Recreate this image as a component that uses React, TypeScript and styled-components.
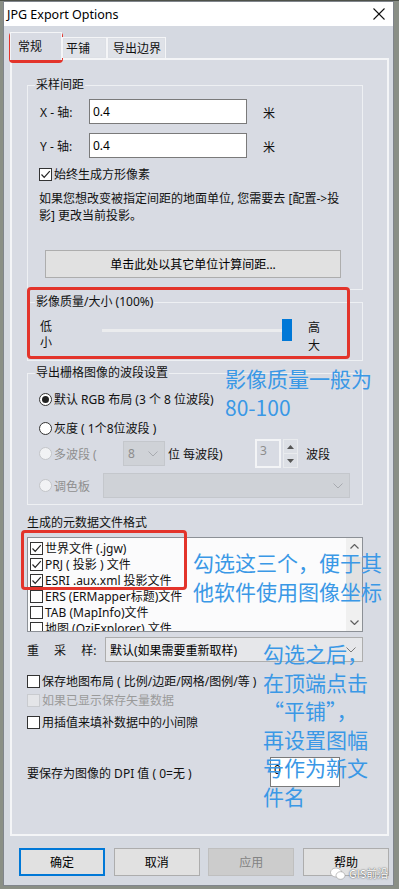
import React from "react";
import styled, { createGlobalStyle } from "styled-components";

const GlobalStyle = createGlobalStyle`
  html, body { margin: 0; padding: 0; }
  body {
    background: #8a8f86;
    font-family: "Noto Sans", "Noto Sans CJK SC", sans-serif;
    font-size: 12px;
    color: #111;
  }
  * { box-sizing: border-box; }
`;

const Root = styled.div`
  position: relative;
  width: 399px;
  height: 889px;
  padding: 1px 0 0 3px;
  overflow: hidden;
  background: linear-gradient(#4d5149 0 1px, #8a8f86 1px);
`;

const Window = styled.div`
  width: 391px;
  height: 885px;
  border: 1px solid #80858c;
  background: #d5d9e1;
  display: flex;
  flex-direction: column;
`;

const TitleBar = styled.div`
  height: 24px;
  flex: none;
  background: #fff;
  display: flex;
  align-items: center;
  justify-content: space-between;
  padding: 0 8px 0 3px;
`;

const Title = styled.span`
  font-family: "Noto Sans", sans-serif;
  font-size: 12.5px;
  color: #000;
`;

const Body = styled.div`
  flex: 1;
  display: flex;
  flex-direction: column;
  padding: 6px 4px 0 6px;
`;

const TabStrip = styled.div`
  display: flex;
  align-items: flex-end;
  height: 26px;
  position: relative;
  z-index: 1;
`;

const Tab = styled.div<{ $active?: boolean; $w: number; $pl: number }>`
  width: ${(p) => p.$w}px;
  height: ${(p) => (p.$active ? 28 : 21)}px;
  margin-bottom: ${(p) => (p.$active ? -2 : 0)}px;
  padding-left: ${(p) => p.$pl}px;
  padding-top: ${(p) => (p.$active ? 6 : 3)}px;
  line-height: 16px;
  background: ${(p) => (p.$active ? "#d8dbe3" : "#dfe2e8")};
  border: 1px solid #f4f5f7;
  border-bottom: none;
  box-shadow: ${(p) => (p.$active ? "none" : "inset 0 0 0 1px #dcdfe5")};
  white-space: nowrap;
`;

const Panel = styled.div`
  height: 778px;
  border: 2px solid #f4f5f7;
  background: #d8dbe3;
  padding: 17px 24px 0 15px;
  display: flex;
  flex-direction: column;
`;

const Group = styled.fieldset<{ $h: number; $mt?: number }>`
  margin: ${(p) => p.$mt ?? 0}px 0 0 0;
  padding: 0;
  border: 1px solid #eef0f3;
  height: ${(p) => p.$h}px;
  min-width: 0;
`;

const Legend = styled.legend`
  padding: 0 1px;
  margin-left: 7px;
  line-height: 16px;
  font-size: 12px;
  color: #111;
`;

const GroupInner = styled.div<{ $pt: number }>`
  padding: ${(p) => p.$pt}px 12px 0 11px;
  display: flex;
  flex-direction: column;
`;

const FieldRow = styled.div<{ $mt?: number }>`
  display: flex;
  align-items: center;
  height: 25px;
  margin-top: ${(p) => p.$mt ?? 0}px;
`;

const FieldLabel = styled.span`
  width: 50px;
  padding-left: 1px;
  white-space: nowrap;
`;

const TextBox = styled.div<{ $w: number; $h: number }>`
  width: ${(p) => p.$w}px;
  height: ${(p) => p.$h}px;
  border: 1px solid #7a7a7a;
  background: #fff;
  padding: 3px 0 0 3px;
  line-height: 17px;
  color: #000;
`;

const Unit = styled.span`
  margin-left: 16px;
  margin-top: 3px;
`;

const CheckRow = styled.div<{ $mt?: number; $disabled?: boolean }>`
  display: flex;
  align-items: center;
  height: 16px;
  margin-top: ${(p) => p.$mt ?? 0}px;
  white-space: nowrap;
  color: ${(p) => (p.$disabled ? "#9a9a9a" : "#111")};
`;

const Box = styled.span<{ $disabled?: boolean }>`
  width: 13px;
  height: 13px;
  flex: none;
  border: 1px solid ${(p) => (p.$disabled ? "#c9cbcf" : "#333")};
  background: ${(p) => (p.$disabled ? "#e4e5e8" : "#fff")};
  margin-right: 2px;
  display: flex;
  align-items: center;
  justify-content: center;
`;

const Para = styled.div`
  margin-top: 8px;
  line-height: 17px;
  white-space: nowrap;
`;

const Button = styled.div<{ $w: number; $variant?: "primary" | "disabled" }>`
  width: ${(p) => p.$w}px;
  height: 28px;
  display: flex;
  align-items: center;
  justify-content: center;
  background: ${(p) => (p.$variant === "disabled" ? "#cccccc" : "#e1e1e1")};
  border: ${(p) =>
    p.$variant === "primary"
      ? "2px solid #0078d7"
      : p.$variant === "disabled"
      ? "1px solid #bfbfbf"
      : "1px solid #adadad"};
  color: ${(p) => (p.$variant === "disabled" ? "#838383" : "#000")};
  white-space: nowrap;
`;

const WideButton = styled(Button)`
  margin: 26px 0 0 6px;
`;

const SliderRow = styled.div`
  display: flex;
  align-items: flex-start;
`;

const SideCol = styled.div<{ $w?: number; $lh: number; $ml?: number }>`
  width: ${(p) => (p.$w ? `${p.$w}px` : "auto")};
  margin-left: ${(p) => p.$ml ?? 0}px;
  display: flex;
  flex-direction: column;
  line-height: ${(p) => p.$lh}px;
  padding-left: 1px;
`;

const Track = styled.div`
  width: 190px;
  height: 22px;
  display: flex;
  justify-content: flex-end;
  background: linear-gradient(#ebecee, #ebecee) center / 100% 3px no-repeat;
`;

const Thumb = styled.div`
  width: 10px;
  height: 22px;
  background: #0078d7;
`;

const RadioRow = styled.div<{ $mt: number; $h: number }>`
  display: flex;
  align-items: center;
  height: ${(p) => p.$h}px;
  margin-top: ${(p) => p.$mt}px;
  white-space: nowrap;
`;

const Radio = styled.span<{ $checked?: boolean; $disabled?: boolean }>`
  width: 13px;
  height: 13px;
  flex: none;
  border-radius: 50%;
  border: 1px solid ${(p) => (p.$disabled ? "#c3c5c9" : "#333")};
  background: ${(p) => (p.$disabled ? "#f1f2f4" : "#fff")};
  margin-right: 2px;
  display: flex;
  align-items: center;
  justify-content: center;
  &::after {
    content: "";
    width: 7px;
    height: 7px;
    border-radius: 50%;
    background: ${(p) => (p.$checked ? "#222" : "transparent")};
  }
`;

const RadioText = styled.span<{ $disabled?: boolean; $w?: number }>`
  color: ${(p) => (p.$disabled ? "#8f8f8f" : "#111")};
  width: ${(p) => (p.$w ? `${p.$w}px` : "auto")};
`;

const Select = styled.div<{ $w: number; $h: number; $disabled?: boolean }>`
  width: ${(p) => p.$w}px;
  height: ${(p) => p.$h}px;
  flex: none;
  border: 1px solid ${(p) => (p.$disabled ? "#c4c7cc" : "#adadad")};
  background: ${(p) => (p.$disabled ? "#cfd2d7" : "#e6e7ea")};
  color: ${(p) => (p.$disabled ? "#8d8d8d" : "#000")};
  display: flex;
  align-items: center;
  justify-content: space-between;
  padding: 0 6px 0 4px;
  white-space: nowrap;
`;

const PlainText = styled.span<{ $ml?: number; $w?: number }>`
  margin-left: ${(p) => p.$ml ?? 0}px;
  width: ${(p) => (p.$w ? `${p.$w}px` : "auto")};
  flex: none;
  color: #111;
`;

const SpinBox = styled.div`
  width: 26px;
  height: 29px;
  border: 2px solid #f3f4f6;
  color: #8d8d8d;
  padding: 2px 0 0 3px;
  line-height: 16px;
`;

const SpinButtons = styled.div`
  width: 15px;
  height: 29px;
  margin-left: 2px;
  border: 1px solid #e9ebee;
  display: flex;
  flex-direction: column;
`;

const SpinHalf = styled.div`
  flex: 1;
  display: flex;
  align-items: center;
  justify-content: center;
  background: #dcdfe5;
  & + & {
    border-top: 1px solid #e9ebee;
  }
`;

const SectionLabel = styled.div`
  margin-top: 10px;
  line-height: 16px;
`;

const List = styled.div`
  margin-top: 6px;
  height: 95px;
  border: 1px solid #8c9096;
  background: #fbfbfc;
  display: flex;
  overflow: hidden;
`;

const ListItems = styled.div`
  flex: 1;
  padding: 2px 0 0 2px;
  display: flex;
  flex-direction: column;
`;

const ListItem = styled.div`
  display: flex;
  align-items: center;
  height: 16px;
  flex: none;
  white-space: nowrap;
  color: #111;
`;

const ScrollBar = styled.div`
  width: 16px;
  flex: none;
  background: #f0f0f0;
  display: flex;
  flex-direction: column;
  align-items: center;
`;

const ScrollArrow = styled.div`
  height: 17px;
  width: 16px;
  display: flex;
  align-items: center;
  justify-content: center;
`;

const ScrollThumb = styled.div`
  width: 16px;
  height: 44px;
  margin-top: 2px;
  background: #e2e2e2;
`;

const ScrollSpacer = styled.div`
  flex: 1;
`;

const ResampleRow = styled.div`
  display: flex;
  align-items: center;
  margin-top: 5px;
  height: 25px;
`;

const ResampleLabel = styled.span`
  width: 78px;
  word-spacing: 12px;
  white-space: nowrap;
`;

const DpiRow = styled.div`
  display: flex;
  align-items: flex-start;
  margin-top: 27px;
  height: 30px;
`;

const DpiText = styled.span`
  width: 243px;
  margin-top: 7px;
  white-space: nowrap;
`;

const ButtonRow = styled.div`
  display: flex;
  justify-content: space-between;
  margin-top: 12px;
  padding-left: 9px;
`;

const RedBox = styled.div<{ $x: number; $y: number; $w: number; $h: number }>`
  position: absolute;
  left: ${(p) => p.$x}px;
  top: ${(p) => p.$y}px;
  width: ${(p) => p.$w}px;
  height: ${(p) => p.$h}px;
  border: 3px solid #e3342b;
  border-radius: 4px;
  pointer-events: none;
`;

const Note = styled.div<{ $x: number; $y: number }>`
  position: absolute;
  left: ${(p) => p.$x}px;
  top: ${(p) => p.$y}px;
  font-family: "Noto Sans CJK SC", sans-serif;
  font-size: 21px;
  line-height: 28.5px;
  color: #3a98e6;
  white-space: pre;
`;

const Watermark = styled.div`
  position: absolute;
  left: 330px;
  top: 865px;
  display: flex;
  align-items: center;
  gap: 3px;
  font-family: "Noto Sans CJK SC", sans-serif;
  font-size: 11px;
  color: #fff;
  text-shadow: 0 0 1px #555, 0 0 2px #777;
`;

const Check = () => (
  <svg width="11" height="11" viewBox="0 0 11 11">
    <polyline points="1.5,5.5 4.2,8.3 9.8,2.2" fill="none" stroke="#222" strokeWidth="1.2" />
  </svg>
);

const Chevron = ({ color = "#7a7a7a" }: { color?: string }) => (
  <svg width="10" height="6" viewBox="0 0 10 6">
    <polyline points="0.5,0.5 5,5 9.5,0.5" fill="none" stroke={color} strokeWidth="1" />
  </svg>
);

const CloseIcon = () => (
  <svg width="12" height="12" viewBox="0 0 12 12">
    <line x1="0.5" y1="0.5" x2="11.5" y2="11.5" stroke="#111" strokeWidth="1.1" />
    <line x1="11.5" y1="0.5" x2="0.5" y2="11.5" stroke="#111" strokeWidth="1.1" />
  </svg>
);

const Tri = ({ up }: { up?: boolean }) => (
  <svg width="7" height="4" viewBox="0 0 7 4">
    <polygon points={up ? "0,4 3.5,0 7,4" : "0,0 7,0 3.5,4"} fill="#555" />
  </svg>
);

const ScrollChevron = ({ up }: { up?: boolean }) => (
  <svg width="9" height="5" viewBox="0 0 9 5">
    <polyline
      points={up ? "0.5,4.5 4.5,0.5 8.5,4.5" : "0.5,0.5 4.5,4.5 8.5,0.5"}
      fill="none"
      stroke="#606060"
      strokeWidth="1.2"
    />
  </svg>
);

const WeChatIcon = () => (
  <svg width="16" height="13" viewBox="0 0 16 13">
    <ellipse cx="6" cy="5.5" rx="5.5" ry="4.5" fill="#fff" stroke="#999" strokeWidth="0.6" />
    <ellipse cx="10.5" cy="8.5" rx="4.5" ry="3.8" fill="#fff" stroke="#999" strokeWidth="0.6" />
  </svg>
);

export default function App() {
  return (
    <>
      <GlobalStyle />
      <Root>
        <Window>
          <TitleBar>
            <Title>JPG Export Options</Title>
            <CloseIcon />
          </TitleBar>
          <Body>
            <TabStrip>
              <Tab $active $w={52} $pl={7}>常规</Tab>
              <Tab $w={45} $pl={3}>平铺</Tab>
              <Tab $w={59} $pl={5}>导出边界</Tab>
            </TabStrip>
            <Panel>
              <Group $h={213}>
                <Legend>采样间距</Legend>
                <GroupInner $pt={6}>
                  <FieldRow>
                    <FieldLabel>X - 轴:</FieldLabel>
                    <TextBox $w={158} $h={25}>0.4</TextBox>
                    <Unit>米</Unit>
                  </FieldRow>
                  <FieldRow $mt={9}>
                    <FieldLabel>Y - 轴:</FieldLabel>
                    <TextBox $w={158} $h={25}>0.4</TextBox>
                    <Unit>米</Unit>
                  </FieldRow>
                  <CheckRow $mt={8}>
                    <Box>
                      <Check />
                    </Box>
                    始终生成方形像素
                  </CheckRow>
                  <Para>
                    如果您想改变被指定间距的地面单位, 您需要去 [配置-&gt;投
                    <br />
                    影] 更改当前投影。
                  </Para>
                  <WideButton $w={296}>单击此处以其它单位计算间距...</WideButton>
                </GroupInner>
              </Group>

              <Group $h={67} $mt={4}>
                <Legend>影像质量/大小 (100%)</Legend>
                <GroupInner $pt={9}>
                  <SliderRow>
                    <SideCol $w={63} $lh={16}>
                      <span>低</span>
                      <span>小</span>
                    </SideCol>
                    <Track>
                      <Thumb />
                    </Track>
                    <SideCol $lh={18} $ml={15}>
                      <span>高</span>
                      <span>大</span>
                    </SideCol>
                  </SliderRow>
                </GroupInner>
              </Group>

              <Group $h={140} $mt={4}>
                <Legend>导出栅格图像的波段设置</Legend>
                <GroupInner $pt={10}>
                  <RadioRow $mt={0} $h={16}>
                    <Radio $checked />
                    <RadioText>默认 RGB 布局 (3 个 8 位波段)</RadioText>
                  </RadioRow>
                  <RadioRow $mt={13} $h={16}>
                    <Radio />
                    <RadioText>灰度 ( 1个8位波段 )</RadioText>
                  </RadioRow>
                  <RadioRow $mt={3} $h={29}>
                    <Radio $disabled />
                    <RadioText $disabled $w={69}>多波段 (</RadioText>
                    <Select $w={42} $h={25} $disabled>
                      <span>8</span>
                      <Chevron color="#a8abb0" />
                    </Select>
                    <PlainText $ml={3} $w={87}>位 每波段)</PlainText>
                    <SpinBox>3</SpinBox>
                    <SpinButtons>
                      <SpinHalf>
                        <Tri up />
                      </SpinHalf>
                      <SpinHalf>
                        <Tri />
                      </SpinHalf>
                    </SpinButtons>
                    <PlainText $ml={8}>波段</PlainText>
                  </RadioRow>
                  <RadioRow $mt={5} $h={25}>
                    <Radio $disabled />
                    <RadioText $disabled $w={55}>调色板</RadioText>
                    <Select $w={247} $h={25} $disabled>
                      <span />
                      <Chevron color="#a8abb0" />
                    </Select>
                  </RadioRow>
                </GroupInner>
              </Group>

              <SectionLabel>生成的元数据文件格式</SectionLabel>
              <List>
                <ListItems>
                  <ListItem>
                    <Box>
                      <Check />
                    </Box>
                    世界文件 (.jgw)
                  </ListItem>
                  <ListItem>
                    <Box>
                      <Check />
                    </Box>
                    PRJ ( 投影 ) 文件
                  </ListItem>
                  <ListItem>
                    <Box>
                      <Check />
                    </Box>
                    ESRI .aux.xml 投影文件
                  </ListItem>
                  <ListItem>
                    <Box />
                    ERS (ERMapper标题)文件
                  </ListItem>
                  <ListItem>
                    <Box />
                    TAB (MapInfo)文件
                  </ListItem>
                  <ListItem>
                    <Box />
                    地图 (OziExplorer) 文件
                  </ListItem>
                </ListItems>
                <ScrollBar>
                  <ScrollArrow>
                    <ScrollChevron up />
                  </ScrollArrow>
                  <ScrollThumb />
                  <ScrollSpacer />
                  <ScrollArrow>
                    <ScrollChevron />
                  </ScrollArrow>
                </ScrollBar>
              </List>

              <ResampleRow>
                <ResampleLabel>重 采 样:</ResampleLabel>
                <Select $w={258} $h={25}>
                  <span>默认(如果需要重新取样)</span>
                  <Chevron />
                </Select>
              </ResampleRow>

              <CheckRow $mt={11}>
                <Box />
                保存地图布局 ( 比例/边距/网格/图例/等 )
              </CheckRow>
              <CheckRow $mt={3} $disabled>
                <Box $disabled />
                如果已显示保存矢量数据
              </CheckRow>
              <CheckRow $mt={6}>
                <Box />
                用插值来填补数据中的小间隙
              </CheckRow>

              <DpiRow>
                <DpiText>要保存为图像的 DPI 值 ( 0=无 )</DpiText>
                <TextBox $w={70} $h={30}>0</TextBox>
              </DpiRow>
            </Panel>

            <ButtonRow>
              <Button $w={86} $variant="primary">确定</Button>
              <Button $w={86}>取消</Button>
              <Button $w={86} $variant="disabled">应用</Button>
              <Button $w={86}>帮助</Button>
            </ButtonRow>
          </Body>
        </Window>

        <RedBox $x={9} $y={32} $w={54} $h={31} />
        <RedBox $x={27} $y={287} $w={323} $h={72} />
        <RedBox $x={21} $y={530} $w={166} $h={60} />

        <Note $x={225} $y={364}>{"影像质量一般为\n80-100"}</Note>
        <Note $x={193} $y={548}>{"勾选这三个，便于其\n他软件使用图像坐标"}</Note>
        <Note $x={263} $y={639}>
          {"勾选之后，\n在顶端点击\n“平铺”，\n再设置图幅\n号作为新文\n件名"}
        </Note>

        <Watermark>
          <WeChatIcon />
          GIS前沿
        </Watermark>
      </Root>
    </>
  );
}
